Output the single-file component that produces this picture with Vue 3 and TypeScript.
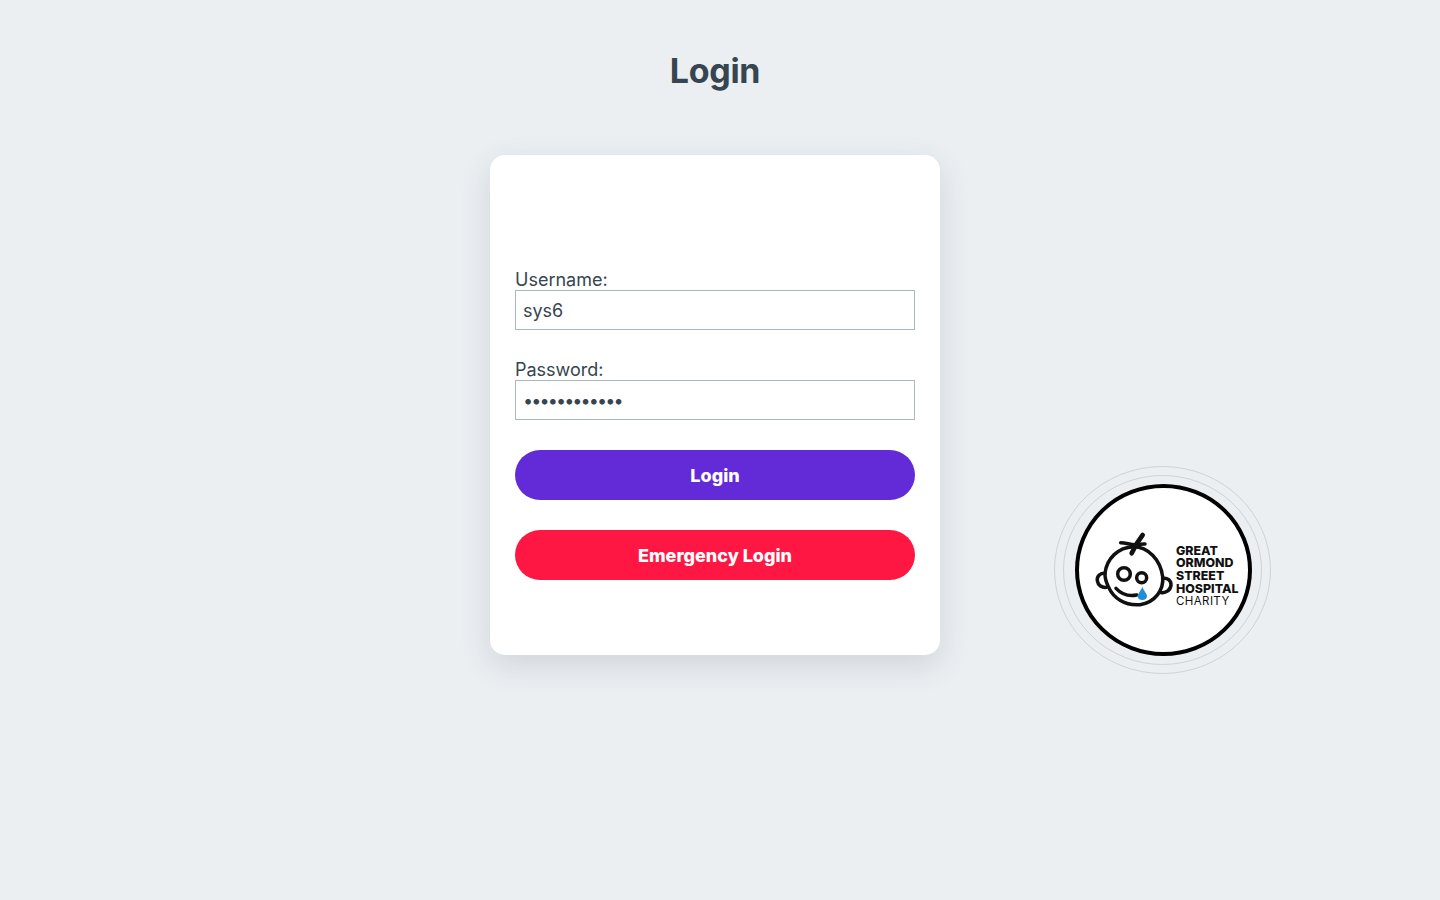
<template>
  <div class="page">
    <h1 class="title">Login</h1>

    <form class="card" @submit.prevent>
      <div class="field">
        <label for="username">Username:</label>
        <input id="username" v-model="username" type="text" />
      </div>
      <div class="field">
        <label for="password">Password:</label>
        <input id="password" v-model="password" class="secret" type="password" />
      </div>
      <button class="btn btn-primary" type="submit">Login</button>
      <button class="btn btn-danger" type="button">Emergency Login</button>
    </form>

    <svg class="badge" width="240" height="230" viewBox="0 0 240 230" role="img" aria-label="Great Ormond Street Hospital Charity">
      <ellipse cx="122.5" cy="115" rx="108" ry="103.5" class="ring" />
      <ellipse cx="122.5" cy="115" rx="99" ry="94.5" class="ring" />
      <ellipse cx="123.500" cy="115" rx="86.5" ry="84" class="disc" />
      <g transform="translate(50 75) scale(0.3333)" class="face">
        <path d="M45 130C50 85 85 52 130 50C175 50 212 90 218 140C222 180 195 218 150 224C105 228 70 205 55 170C48 155 44 145 45 130Z" />
        <path d="M92 38C108 38 120 44 135 44C145 44 155 42 165 42" />
        <path d="M158 15C146 30 134 50 125 70" stroke-width="14" />
        <path d="M45 130C30 128 20 140 22 152C24 166 36 174 50 172" />
        <path d="M218 145C232 142 244 152 243 165C242 180 228 190 214 188" />
        <circle cx="102" cy="132" r="19" />
        <circle cx="155" cy="143" r="15" />
        <path d="M78 175C92 190 115 200 140 195" />
        <path class="drop" d="M157 170C162 184 171 190 171 198C171 206 165 210 157 210C149 210 143 206 143 198C143 190 152 184 157 170Z" />
      </g>
      <g class="words">
        <text x="136" y="99.500">GREAT</text>
        <text x="136" y="112">ORMOND</text>
        <text x="136" y="125">STREET</text>
        <text x="136" y="137.500">HOSPITAL</text>
        <text x="136" y="150" class="light">CHARITY</text>
      </g>
    </svg>
  </div>
</template>

<script setup lang="ts">
import { ref } from "vue";

const username = ref<string>("sys6");
const password = ref<string>("••••••••••••");
</script>

<style>
html,
body {
  background: #ebeff2;
}
</style>

<style scoped>
.page {
  position: relative;
  box-sizing: border-box;
  min-height: 900px;
  padding-right: 10px;
  display: flex;
  flex-direction: column;
  align-items: center;
  font-family: Inter, "Liberation Sans", sans-serif;
  color: #36454f;
}

.title {
  margin: 0;
  padding-top: 50px;
  height: 155px;
  box-sizing: border-box;
  font-size: 34px;
  line-height: 42px;
  font-weight: 700;
  letter-spacing: -0.3px;
}

.card {
  box-sizing: border-box;
  width: 450px;
  height: 500px;
  padding: 113px 25px 75px;
  background: #fff;
  border-radius: 15px;
  box-shadow: 0 10px 30px rgba(54, 69, 79, 0.15);
  display: flex;
  flex-direction: column;
}

.field {
  display: flex;
  flex-direction: column;
  margin-bottom: 28px;
}

.field:nth-child(2) {
  margin-bottom: 30px;
}

.field label {
  font-size: 18px;
  line-height: 24px;
  margin-bottom: -2px;
}

.field input {
  position: relative;
  box-sizing: border-box;
  width: 400px;
  height: 40px;
  padding: 0 7px;
  border: 1px solid #a9b9c1;
  border-radius: 0;
  outline: none;
  background: #fff;
  font-family: inherit;
  font-size: 18px;
  color: #36454f;
}

.field .secret {
  letter-spacing: -1.9px;
}

.btn {
  width: 400px;
  height: 50px;
  flex: none;
  border: none;
  border-radius: 25px;
  color: #fff;
  font-family: inherit;
  font-size: 18px;
  font-weight: 800;
  cursor: pointer;
}

.btn-primary {
  background: #622bd7;
  margin-bottom: 30px;
}

.btn-danger {
  background: #ff1744;
}

/* logo floats beside the card */
.badge {
  position: absolute;
  left: 1040px;
  top: 455px;
}

.ring {
  fill: none;
  stroke: #cfd3d6;
  stroke-width: 1;
}

.disc {
  fill: #fff;
  stroke: #000;
  stroke-width: 4;
}

.face {
  fill: none;
  stroke: #111;
  stroke-width: 10.5;
  stroke-linecap: round;
}

.face .drop {
  fill: #1e8fd5;
  stroke: none;
}

.words text {
  font-family: Inter, "Liberation Sans", sans-serif;
  font-size: 12.4px;
  font-weight: 800;
  fill: #111;
}

.words .light {
  font-size: 11.5px;
  font-weight: 400;
  letter-spacing: 0.4px;
}
</style>
